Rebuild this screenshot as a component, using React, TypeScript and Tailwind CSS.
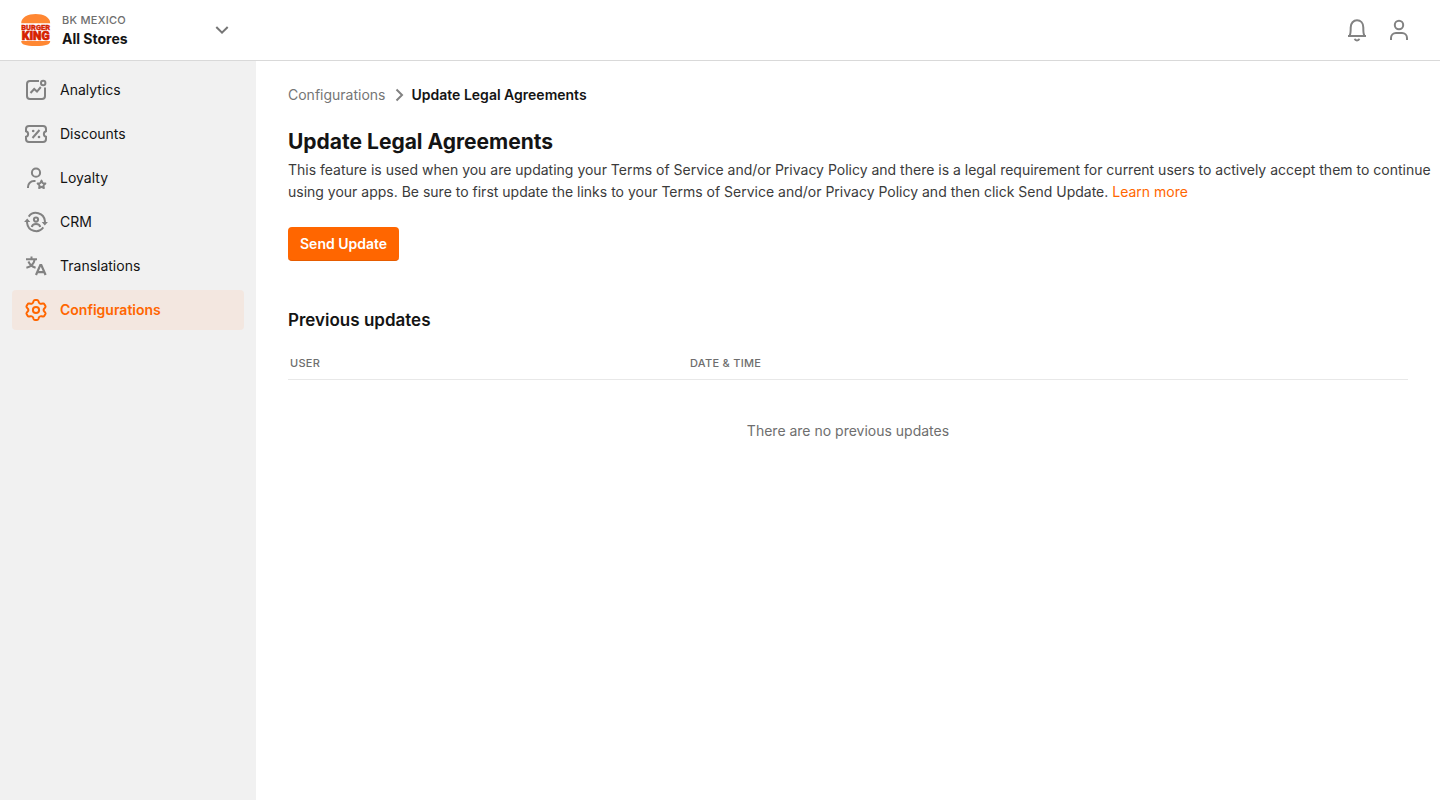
import type { ReactNode } from "react";

const stroke = {
  width: 24,
  height: 24,
  viewBox: "0 0 24 24",
  fill: "none",
  stroke: "currentColor",
  strokeWidth: 2,
  "aria-hidden": true,
} as const;

function Logo() {
  return (
    <svg width="32" height="32" viewBox="0 0 32 32" aria-hidden="true" className="shrink-0">
      <path d="M1.2 9.2C1.2 3.2 8 0 15.7 0s14.5 3.2 14.5 9.2Z" fill="#ff8732" />
      <path d="M1.2 27h29c0 3.600-4 5-14.5 5S1.2 30.600 1.2 27Z" fill="#ff8732" />
      <g fill="#d62300" stroke="#d62300" textAnchor="middle" className="font-['Roboto',sans-serif] font-black">
        <text x="15.700" y="15.800" fontSize="7.500" strokeWidth="0.300">BURGER</text>
        <text x="15.700" y="25.800" fontSize="12" strokeWidth="0.700">KING</text>
      </g>
    </svg>
  );
}

function AnalyticsIcon() {
  return (
    <svg {...stroke}>
      <path d="M15 3H6a3 3 0 0 0-3 3v12a3 3 0 0 0 3 3h12a3 3 0 0 0 3-3V9.500" />
      <circle cx="19.200" cy="5" r="2.200" />
      <path d="m6.500 15 3.700-4 2.800 2.600 3.800-4.600" />
    </svg>
  );
}

function DiscountsIcon() {
  return (
    <svg {...stroke}>
      <path d="M5 4h14a3 3 0 0 1 3 3v2.200a2.900 2.900 0 0 0 0 5.600V17a3 3 0 0 1-3 3H5a3 3 0 0 1-3-3v-2.200a2.900 2.900 0 0 0 0-5.600V7a3 3 0 0 1 3-3Z" />
      <path d="m8.500 16 7-8" />
      <circle cx="9.200" cy="9" r="1.300" fill="currentColor" stroke="none" />
      <circle cx="15" cy="15" r="1.300" fill="currentColor" stroke="none" />
    </svg>
  );
}

function LoyaltyIcon() {
  return (
    <svg {...stroke}>
      <circle cx="12" cy="6.700" r="4.100" />
      <path d="M4 22v-1a6 6 0 0 1 6-6h1.500" />
      <path
        d="m17.500 14.600 1.200 2.500 2.700.4-1.950 1.900.46 2.700-2.410-1.280-2.410 1.280.46-2.700-1.950-1.900 2.700-.4Z"
        strokeWidth="1.900"
        strokeLinejoin="round"
      />
    </svg>
  );
}

function CrmIcon() {
  return (
    <svg {...stroke}>
      <path d="M4.700 6.600a9 9 0 0 1 16.200 4.400v2.500" />
      <path d="M19.300 17.400A9 9 0 0 1 3.100 13v-2.500" />
      <path d="M17.700 12h6.200l-3.100 3.500ZM.1 12h6.200l-3.100-3.500Z" fill="currentColor" stroke="none" />
      <circle cx="12" cy="9.600" r="2.100" />
      <path d="M7.800 17c.3-2.200 1.700-3 4.200-3s3.900.8 4.200 3" />
    </svg>
  );
}

function TranslationsIcon() {
  return (
    <svg {...stroke}>
      <path d="M2 5.200h11M7.500 2.500v2.700M4.400 7.500c1.300 3 3.500 5 7.200 6.200M10.700 5.500c-.8 4.300-3.800 7.200-8.300 8.300" />
      <path d="m12 21 4.300-10h1l4.300 10M13.600 18.200h6.400" strokeWidth="2.200" />
    </svg>
  );
}

function GearIcon() {
  return (
    <svg {...stroke} strokeLinejoin="round">
      <path d="M9.200 4.200l.4-1.200Q10 1.900 11 1.900h2q1 0 1.400 1.100l.4 1.200q.3.900 1 1.300.8.500 1.700.3l1.300-.3q1.100-.2 1.600.7l1 1.700q.5.900-.3 1.700l-.8.900q-.7.700-.7 1.500t.7 1.500l.8.900q.8.800.3 1.700l-1 1.700q-.5.900-1.600.7l-1.300-.3q-.9-.2-1.700.3-.7.400-1 1.300l-.4 1.200q-.4 1.100-1.400 1.100h-2q-1 0-1.400-1.100l-.4-1.200q-.3-.9-1-1.300-.8-.5-1.700-.3l-1.300.3q-1.100.2-1.600-.7l-1-1.700q-.5-.9.300-1.700l.8-.9q.7-.7.700-1.500t-.7-1.500l-.8-.9q-.8-.8-.3-1.700l1-1.700q.5-.9 1.600-.7l1.300.3q.9.200 1.700-.3.700-.4 1-1.300Z" />
      <circle cx="12" cy="12" r="3.100" />
    </svg>
  );
}

function BellIcon() {
  return (
    <svg {...stroke}>
      <path d="M3 18h18M5 18V16.500c.6-1 .7-3 .7-7C5.700 5 8.500 2.300 12 2.300S18.300 5 18.300 9.500c0 4 .1 6 .7 7V18" />
      <path d="M9.700 20.800a2.400 2.400 0 0 0 4.600 0" />
    </svg>
  );
}

function PersonIcon() {
  return (
    <svg {...stroke}>
      <circle cx="12" cy="7" r="4.200" />
      <path d="M4 22v-2a5 5 0 0 1 5-5h6a5 5 0 0 1 5 5v2" />
    </svg>
  );
}

const links: { label: string; icon: ReactNode; active?: boolean }[] = [
  { label: "Analytics", icon: <AnalyticsIcon /> },
  { label: "Discounts", icon: <DiscountsIcon /> },
  { label: "Loyalty", icon: <LoyaltyIcon /> },
  { label: "CRM", icon: <CrmIcon /> },
  { label: "Translations", icon: <TranslationsIcon /> },
  { label: "Configurations", icon: <GearIcon />, active: true },
];

export default function App() {
  return (
    <div className="flex min-h-screen flex-col bg-white font-['Inter',sans-serif] text-sm text-[#141414]">
      <header className="flex h-[61px] items-center justify-between border-b border-[#d9d9d9] pr-[29px]">
        <button type="button" className="flex w-64 items-center gap-2.5 pr-[26px] pl-5 text-left">
          <Logo />
          <span className="flex grow flex-col">
            <span className="text-[11px] leading-[18px] font-medium tracking-wide text-[#6e6e6e]">BK MEXICO</span>
            <span className="leading-5 font-bold">All Stores</span>
          </span>
          <svg width="16" height="16" viewBox="0 0 16 16" fill="none" stroke="#757575" strokeWidth="2" aria-hidden="true">
            <path d="m2.300 5 5.700 5.700L13.700 5" />
          </svg>
        </button>
        <div className="flex gap-[18px] text-[#828282]">
          <button type="button" aria-label="Notifications"><BellIcon /></button>
          <button type="button" aria-label="Account"><PersonIcon /></button>
        </div>
      </header>

      <div className="flex grow">
        <nav className="flex w-64 shrink-0 flex-col gap-1 bg-[#f1f1f1] px-3 pt-[9px]">
          {links.map(({ label, icon, active }) => (
            <a
              key={label}
              href="#"
              aria-current={active ? "page" : undefined}
              className={
                active
                  ? "flex h-10 items-center gap-3 rounded bg-[#f3e7e0] px-3 font-semibold text-[#ff6600]"
                  : "flex h-10 items-center gap-3 rounded px-3"
              }
            >
              <span className={active ? "text-[#ff6600]" : "text-[#828282]"}>{icon}</span>
              {label}
            </a>
          ))}
        </nav>

        <main className="min-w-0 grow px-8 pt-6">
          <nav aria-label="Breadcrumb" className="flex items-center gap-1.5 leading-5">
            <a href="#" className="text-[#757575]">Configurations</a>
            <svg width="14" height="14" viewBox="0 0 14 14" fill="none" stroke="#828282" strokeWidth="2" aria-hidden="true">
              <path d="m4.500 1.500 5.500 5.500-5.500 5.500" />
            </svg>
            <span aria-current="page" className="font-semibold">Update Legal Agreements</span>
          </nav>

          <h1 className="mt-[21px] text-[21px] leading-8 font-bold">Update Legal Agreements</h1>
          <p className="mt-px -mr-7 leading-[22px] text-[#3b3b3b]">
            This feature is used when you are updating your Terms of Service and/or Privacy Policy and there is a legal
            requirement for current users to actively accept them to continue using your apps. Be sure to first update
            the links to your Terms of Service and/or Privacy Policy and then click Send Update.{" "}
            <a href="#" className="text-[#ff6600]">Learn more</a>
          </p>
          <button
            type="button"
            className="mt-6 h-[34px] rounded border-b border-[#e65c00] bg-[#ff6600] px-3 font-semibold text-white"
          >
            Send Update
          </button>

          <h2 className="mt-[47px] text-[17px] leading-6 font-semibold">Previous updates</h2>
          <table className="mt-[22px] w-full table-fixed border-collapse">
            <thead>
              <tr className="border-b border-[#e8e8e8] text-left text-[11px] leading-[18px] tracking-wide text-[#6e6e6e]">
                <th scope="col" className="w-[400px] px-0.5 pb-[7px] font-medium">USER</th>
                <th scope="col" className="px-0.5 pb-[7px] font-medium">DATE &amp; TIME</th>
              </tr>
            </thead>
            <tbody>
              <tr>
                <td colSpan={2} className="pt-10 text-center leading-[22px] text-[#6e6e6e]">
                  There are no previous updates
                </td>
              </tr>
            </tbody>
          </table>
        </main>
      </div>
    </div>
  );
}
